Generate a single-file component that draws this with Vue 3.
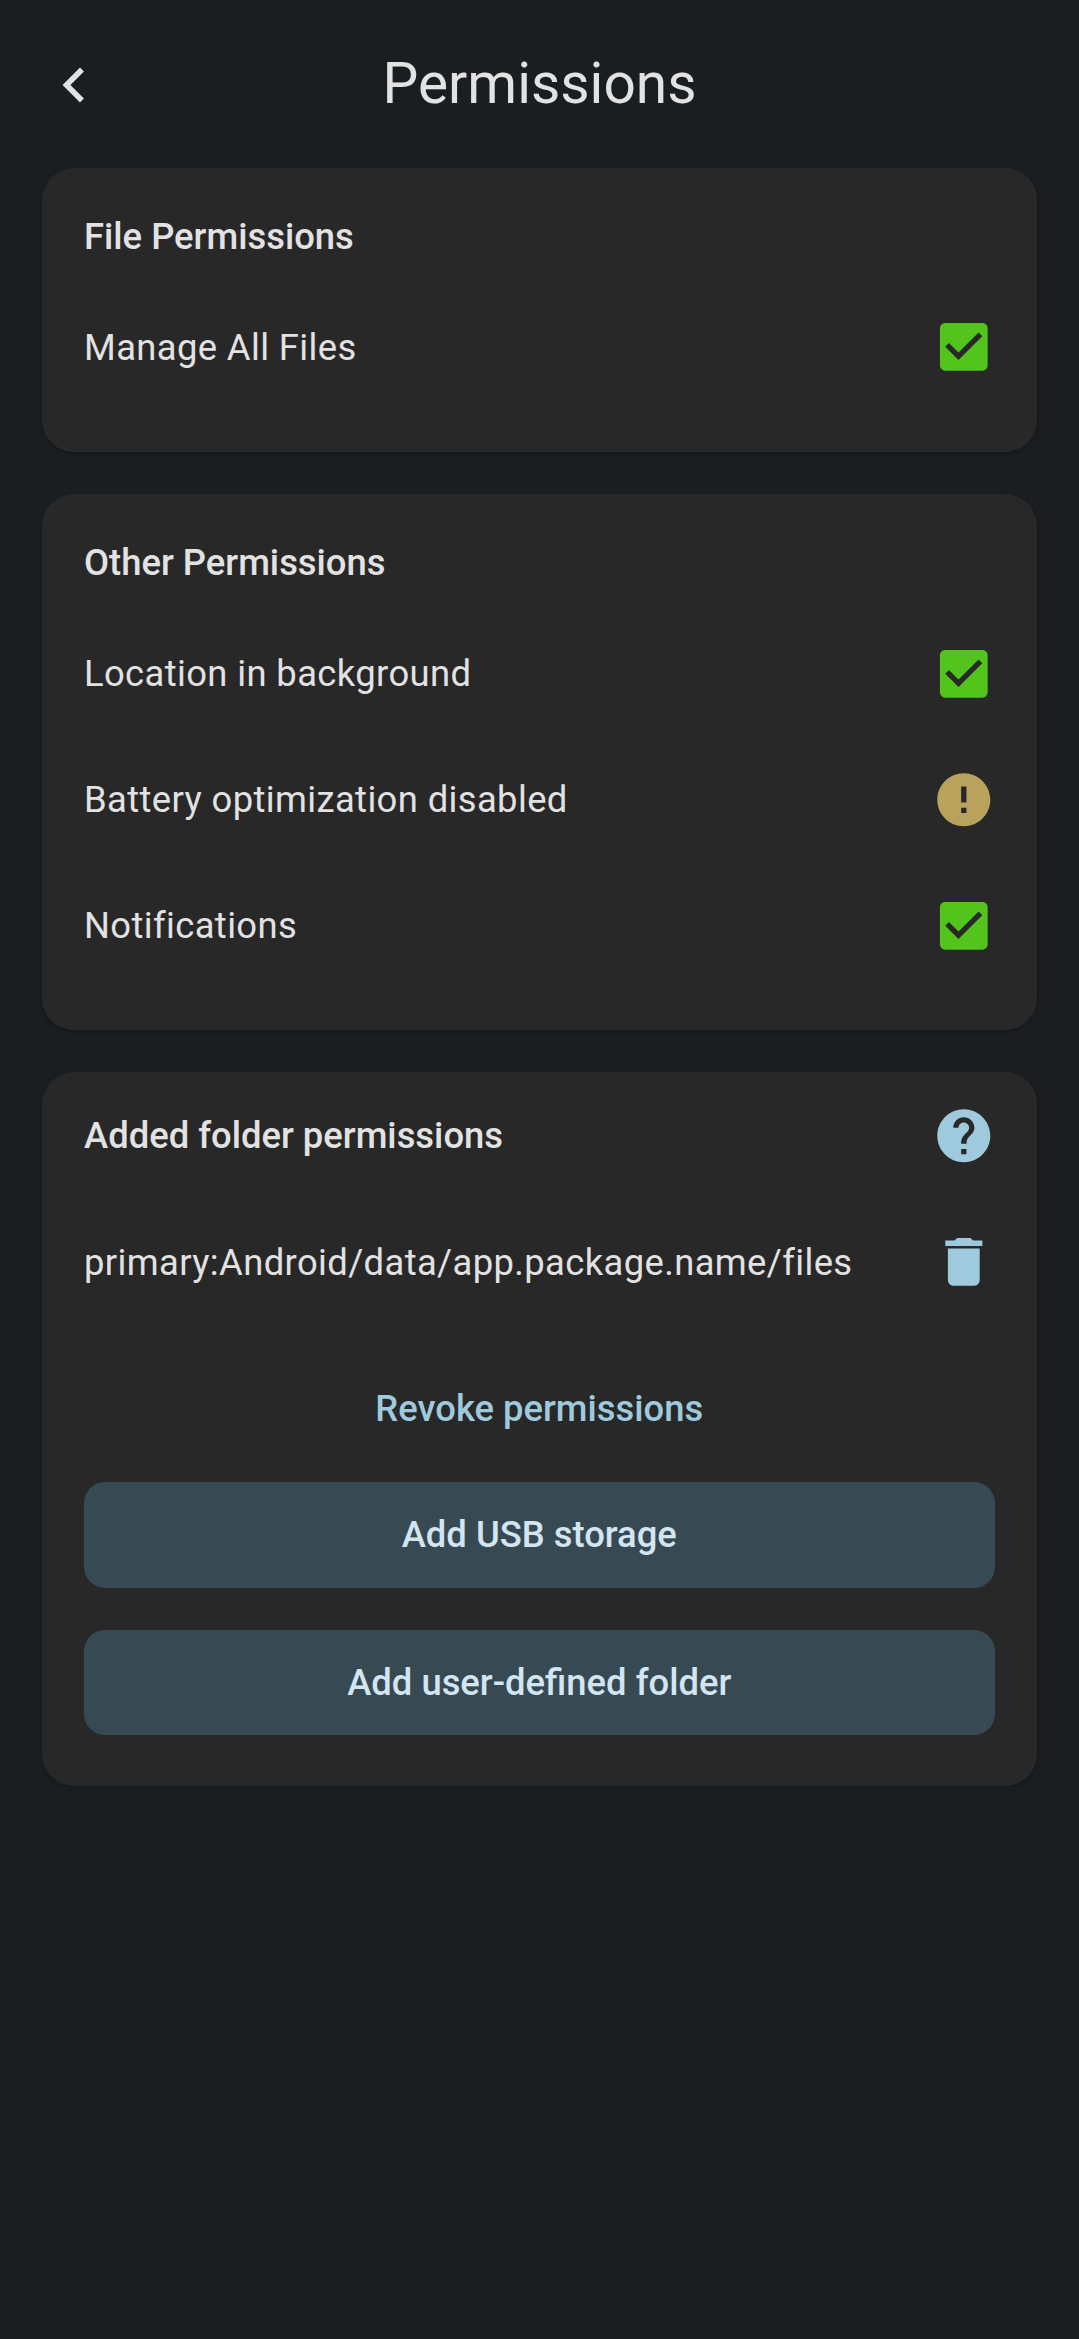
<script setup>
const icons = {
  check: 'M19 3H5c-1.11 0-2 .9-2 2v14c0 1.1.89 2 2 2h14c1.11 0 2-.9 2-2V5c0-1.1-.89-2-2-2z',
  warn: 'M12 2C6.48 2 2 6.48 2 12s4.48 10 10 10 10-4.48 10-10S17.52 2 12 2zm1 15h-2v-2h2v2zm0-4h-2V7h2v6z',
  help: 'M12 2C6.48 2 2 6.48 2 12s4.48 10 10 10 10-4.48 10-10S17.52 2 12 2zm1 17h-2v-2h2v2zm2.07-7.75l-.9.92C13.45 12.9 13 13.5 13 15h-2v-.5c0-1.1.45-2.1 1.17-2.83l1.24-1.26c.37-.36.59-.86.59-1.41 0-1.1-.9-2-2-2s-2 .9-2 2H8c0-2.21 1.79-4 4-4s4 1.79 4 4c0 .88-.36 1.68-.93 2.25z',
  trash: 'M6 19c0 1.1.9 2 2 2h8c1.1 0 2-.9 2-2V7H6v12zM19 4h-3.5l-1-1h-5l-1 1H5v2h14V4z'
}
const checkMark = 'M10 17l-5-5 1.41-1.41L10 14.17l7.59-7.59L19 8l-9 9z'
const otherRows = [
  { label: 'Location in background', icon: 'check' },
  { label: 'Battery optimization disabled', icon: 'warn' },
  { label: 'Notifications', icon: 'check' }
]
</script>

<template>
  <div class="page">
    <header class="header">
      <svg class="back" viewBox="0 0 64 64" aria-label="Back">
        <path d="M38 19.5 L24.5 33 L38 46.5" fill="none" stroke="#e2e2e2" stroke-width="5.6" stroke-linecap="square" />
      </svg>
      <h1 class="title">Permissions</h1>
    </header>

    <main class="cards">
      <section class="card">
        <h2 class="card-head">File Permissions</h2>
        <div class="row">
          <span class="label">Manage All Files</span>
          <svg class="icon" viewBox="0 0 24 24">
            <path :d="icons.check" fill="#53c41b" />
            <path :d="checkMark" fill="#282828" />
          </svg>
        </div>
      </section>

      <section class="card card-other">
        <h2 class="card-head">Other Permissions</h2>
        <div v-for="row in otherRows" :key="row.label" class="row">
          <span class="label">{{ row.label }}</span>
          <svg class="icon" viewBox="0 0 24 24">
            <template v-if="row.icon === 'check'">
              <path :d="icons.check" fill="#53c41b" />
              <path :d="checkMark" fill="#282828" />
            </template>
            <template v-else>
              <path :d="icons.warn" fill="#b9a35c" />
            </template>
          </svg>
        </div>
      </section>

      <section class="card card-folders">
        <div class="card-head card-head-icon">
          <h2 class="head-text">Added folder permissions</h2>
          <svg class="icon" viewBox="0 0 24 24"><path :d="icons.help" fill="#9fc9dc" /></svg>
        </div>
        <div class="row">
          <span class="label">primary:Android/data/app.package.name/files</span>
          <svg class="icon" viewBox="0 0 24 24"><path :d="icons.trash" fill="#9fc9dc" /></svg>
        </div>
        <div class="revoke">Revoke permissions</div>
        <button class="btn">Add USB storage</button>
        <button class="btn">Add user-defined folder</button>
      </section>
    </main>
  </div>
</template>

<style scoped>
.page {
  min-height: 2339px;
  background: #1a1e21;
  font-family: Roboto, "Liberation Sans", sans-serif;
  color: #e2e2e2;
  box-sizing: border-box;
}
.header {
  position: relative;
  height: 168px;
  display: flex;
  align-items: center;
  justify-content: center;
}
.back {
  position: absolute;
  left: 42px;
  top: 52px;
  width: 64px;
  height: 64px;
}
.title {
  margin: 0;
  font-size: 56.8px;
  font-weight: 400;
  line-height: 64px;
}
.cards {
  display: flex;
  flex-direction: column;
  gap: 42.5px;
  padding: 0 42px;
}
.card {
  background: #282828;
  border-radius: 32px;
  padding: 42px 42.5px 62.5px 42px;
  box-shadow: 0 2px 4px rgba(0, 0, 0, 0.2);
}
.card-other {
  padding-bottom: 61.4px;
}
.card-folders {
  padding-top: 32px;
  padding-bottom: 51px;
}
.card-head {
  margin: 0 0 42.6px;
  height: 52px;
  line-height: 53px;
  font-size: 36.4px;
  font-weight: 500;
}
.card-head-icon {
  height: 63.6px;
  margin-bottom: 52px;
  display: flex;
  align-items: center;
  justify-content: space-between;
}
.head-text {
  margin: 0;
  font: inherit;
}
.row {
  height: 84.8px;
  display: flex;
  align-items: center;
  justify-content: space-between;
  font-size: 36.4px;
  letter-spacing: 0.38px;
}
.row + .row {
  margin-top: 41.4px;
}
.label {
  line-height: 1;
  padding-top: 1.6px;
}
.icon {
  width: 63.6px;
  height: 63.6px;
  margin-right: -0.8px;
  flex: none;
}
.revoke {
  height: 106px;
  margin-top: 50.6px;
  margin-bottom: 21px;
  display: flex;
  align-items: center;
  justify-content: center;
  font-size: 36.4px;
  font-weight: 500;
  color: #9fc9dc;
}
.btn {
  display: block;
  width: 100%;
  height: 105.5px;
  border: 0;
  padding: 0;
  border-radius: 21px;
  background: #374a54;
  color: #d3e5f0;
  font: inherit;
  font-size: 36.4px;
  font-weight: 500;
}
.btn + .btn {
  margin-top: 42px;
}
</style>

<style>
html, body { background: #1a1e21; }
</style>
